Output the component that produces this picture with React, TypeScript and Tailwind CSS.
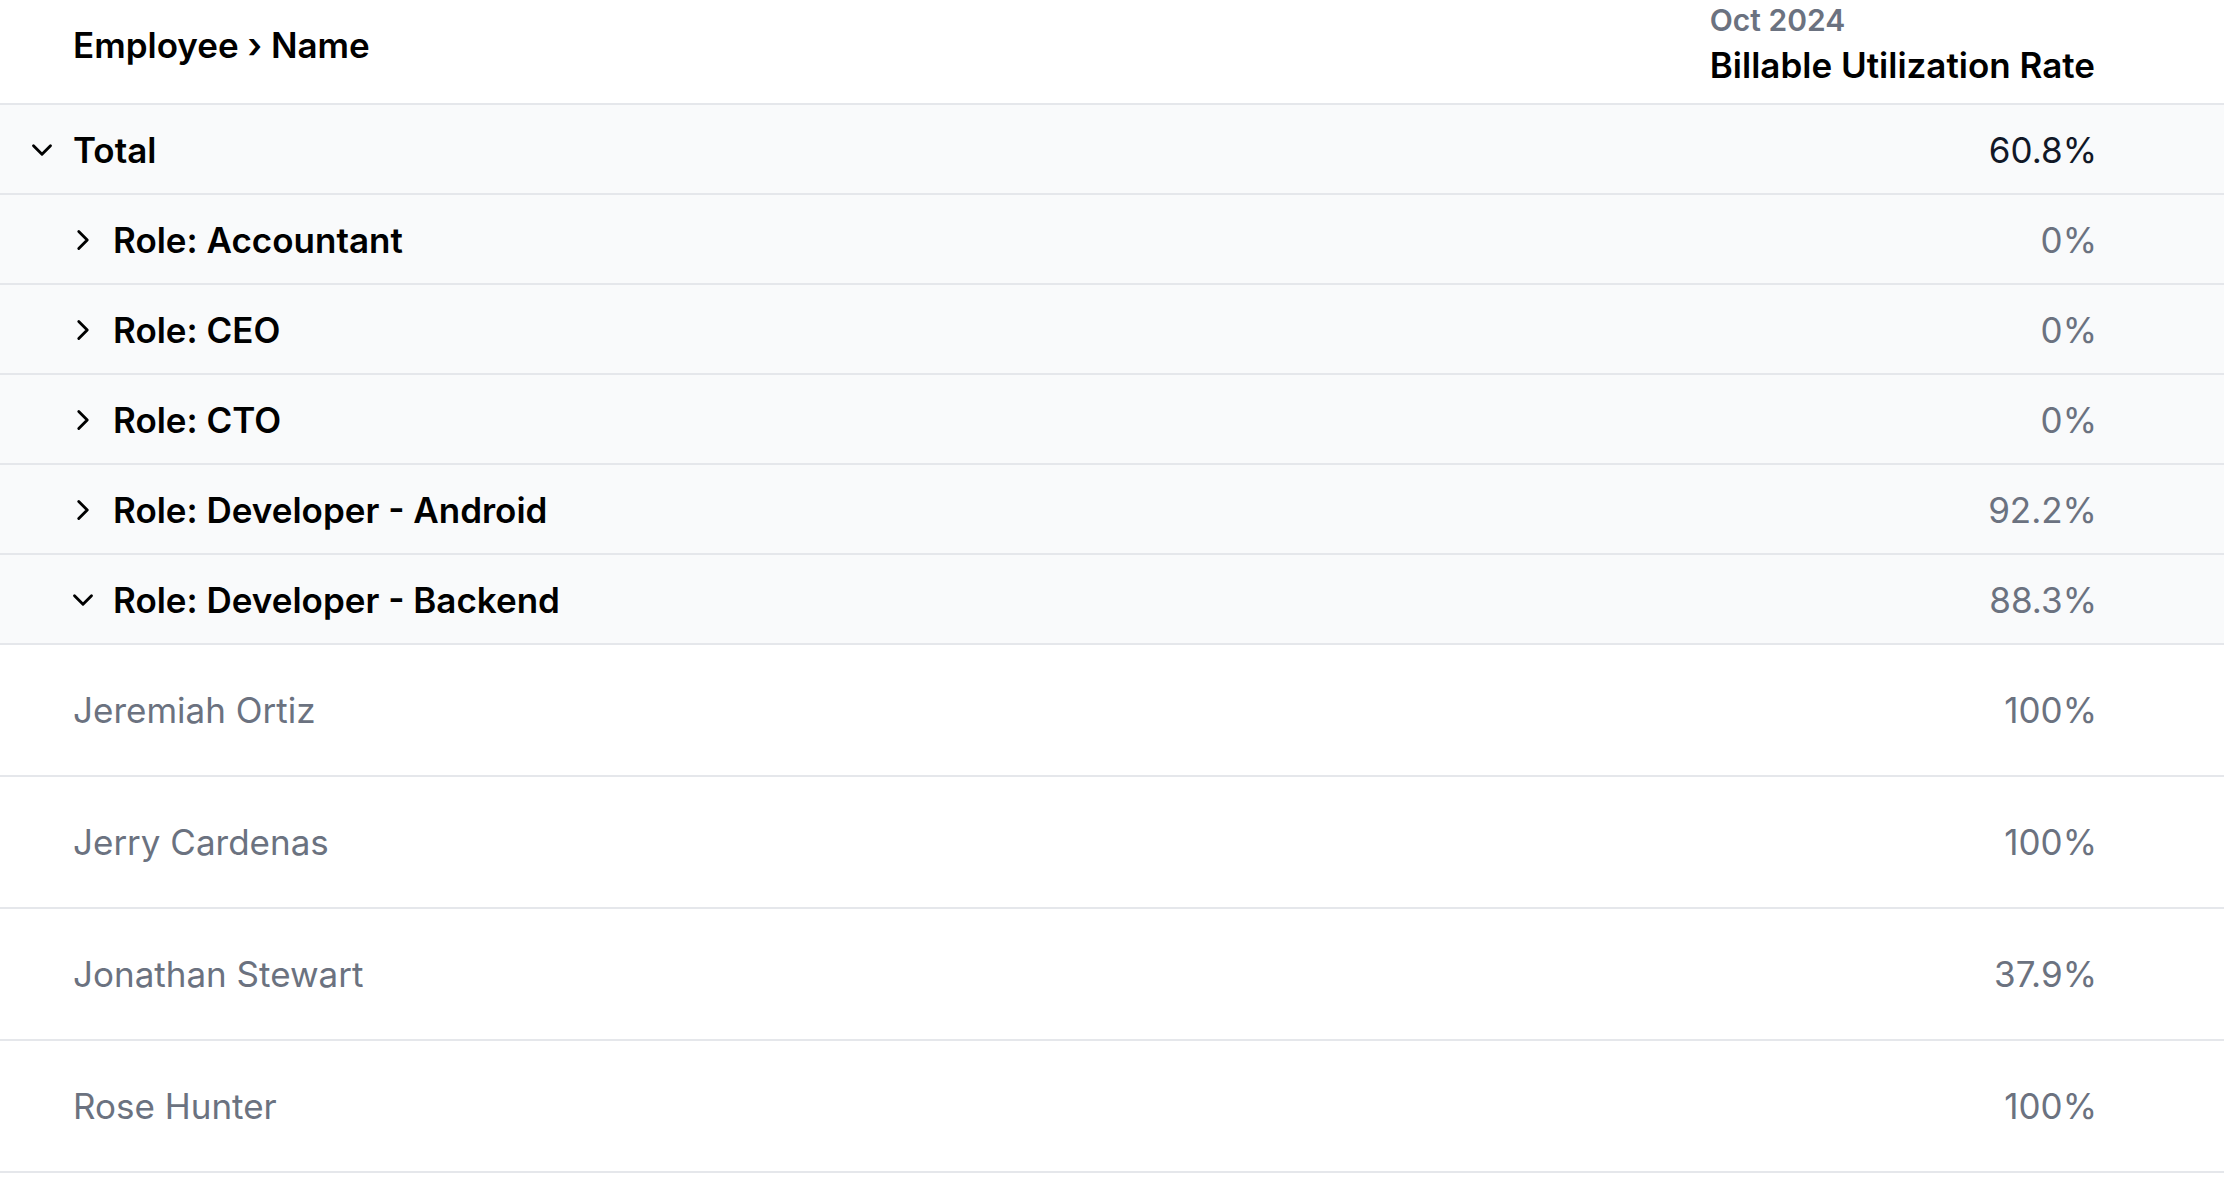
import React from 'react';
import { ChevronDown, ChevronRight } from 'lucide-react';

type Group = { label: string; value: string; open?: boolean };

const ROLES: Group[] = [
  { label: 'Role: Accountant', value: '0%' },
  { label: 'Role: CEO', value: '0%' },
  { label: 'Role: CTO', value: '0%' },
  { label: 'Role: Developer - Android', value: '92.2%' },
  { label: 'Role: Developer - Backend', value: '88.3%', open: true },
];

const PEOPLE = [
  { name: 'Jeremiah Ortiz', value: '100%' },
  { name: 'Jerry Cardenas', value: '100%' },
  { name: 'Jonathan Stewart', value: '37.9%' },
  { name: 'Rose Hunter', value: '100%' },
];

const App: React.FC = () => {
  return (
    <div className="min-h-[1188px] w-full bg-white font-['Inter','Liberation_Sans',sans-serif] text-[35px] text-black">
      {/* header */}
      <div className="flex h-[105px] items-start border-b-2 border-[#e5e7eb]">
        <div className="flex h-[90px] flex-1 items-center pl-[73px] font-semibold leading-[54px]">
          Employee › Name
        </div>
        <div className="flex flex-col items-start pr-[129px]">
          <span className="h-[40px] text-[30px] font-semibold leading-[40px] text-[#6b7280]">Oct 2024</span>
          <span className="h-[50px] font-semibold leading-[50px]">Billable Utilization Rate</span>
        </div>
      </div>

      {/* total */}
      <div className="flex h-[90px] items-center border-b-2 border-[#e5e7eb] bg-[#f9fafb] pl-[25px] pr-[127px] pt-[2px]">
        <ChevronDown size={34} strokeWidth={2} className="shrink-0 text-black" />
        <span className="ml-[14px] flex-1 font-semibold">Total</span>
        <span className="text-[#111827]">60.8%</span>
      </div>

      {/* roles */}
      {ROLES.map((r) => (
        <div
          key={r.label}
          className="flex h-[90px] items-center border-b-2 border-[#e5e7eb] bg-[#f9fafb] pl-[66px] pr-[127px] pt-[2px]"
        >
          {r.open ? (
            <ChevronDown size={34} strokeWidth={2} className="shrink-0 text-black" />
          ) : (
            <ChevronRight size={34} strokeWidth={2} className="shrink-0 text-black" />
          )}
          <span className="ml-[13px] flex-1 font-semibold">{r.label}</span>
          <span className="text-[#6b7280]">{r.value}</span>
        </div>
      ))}

      {/* people */}
      {PEOPLE.map((p) => (
        <div key={p.name} className="flex h-[132px] items-center border-b-2 border-[#e5e7eb] pl-[73px] pr-[127px]">
          <span className="flex-1 text-[#6b7280]">{p.name}</span>
          <span className="text-[#6b7280]">{p.value}</span>
        </div>
      ))}
    </div>
  );
};

export default App;
